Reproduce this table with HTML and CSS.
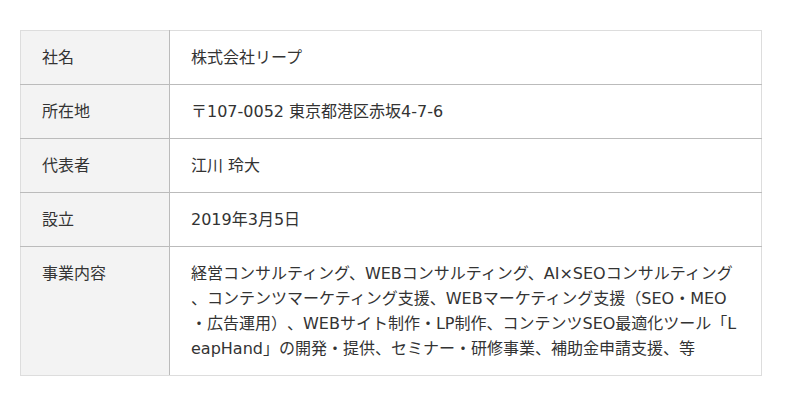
FILE: index.html
```html
<!DOCTYPE html>
<html lang="ja">
<head>
<meta charset="utf-8">
<link rel="stylesheet" href="styles.css">
</head>
<body>
<div class="wrap">
  <table class="info">
    <tbody>
      <tr><th>社名</th><td>株式会社リープ</td></tr>
      <tr><th>所在地</th><td>〒107-0052 東京都港区赤坂4-7-6</td></tr>
      <tr><th>代表者</th><td>江川 玲大</td></tr>
      <tr><th>設立</th><td>2019年3月5日</td></tr>
      <tr><th class="top">事業内容</th><td>経営コンサルティング、WEBコンサルティング、AI×SEOコンサルティング、コンテンツマーケティング支援、WEBマーケティング支援（SEO・MEO・広告運用）、WEBサイト制作・LP制作、コンテンツSEO最適化ツール「LeapHand」の開発・提供、セミナー・研修事業、補助金申請支援、等</td></tr>
    </tbody>
  </table>
</div>
</body>
</html>
```

FILE: styles.css
```css
html, body {
  margin: 0;
  padding: 0;
  background: #fff;
}
body {
  font-family: "DejaVu Sans", "Noto Sans CJK JP", sans-serif;
  font-size: 16px;
  color: #333;
  text-spacing-trim: space-all;
}
.wrap {
  padding: 30px 20px;
}
.info {
  width: 742px;
  border-collapse: collapse;
  border: 1px solid #ddd;
}
.info th,
.info td {
  padding: 14px 24px 14px 21px;
  line-height: 25px;
  text-align: left;
  vertical-align: top;
  font-weight: normal;
  border-bottom: 1px solid #bbb;
}
.info tr:last-child th,
.info tr:last-child td {
  border-bottom: 1px solid #ddd;
}
.info th {
  width: 103px;
  background: #f3f3f3;
  border-right: 1px solid #bbb;
}
.info td {
  word-break: break-all;
  line-break: anywhere;
}
```
